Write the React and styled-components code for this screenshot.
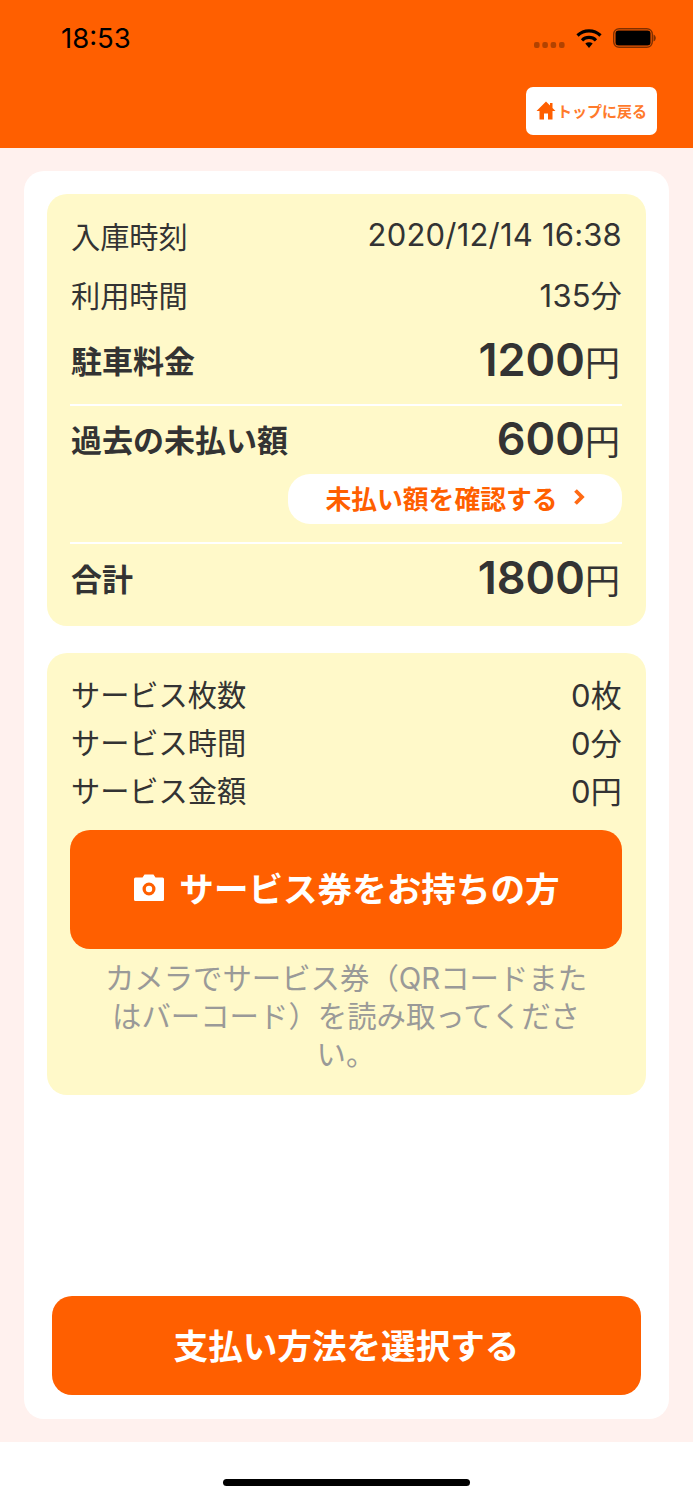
import React from "react";
import styled, { createGlobalStyle } from "styled-components";

const ORANGE = "#ff5f00";
const INK = "#333333";

const GlobalStyle = createGlobalStyle`
  html, body {
    margin: 0;
    padding: 0;
    background: #ffffff;
  }
  * {
    box-sizing: border-box;
  }
`;

const Root = styled.div`
  width: 693px;
  height: 1500px;
  display: flex;
  flex-direction: column;
  font-family: Inter, "Noto Sans CJK JP", sans-serif;
  color: ${INK};
`;

const Header = styled.header`
  height: 148px;
  background: ${ORANGE};
  padding: 0 36px 13px 61px;
  display: flex;
  flex-direction: column;
`;

const StatusBar = styled.div`
  height: 87px;
  padding-top: 21px;
  display: flex;
  justify-content: space-between;
  align-items: flex-start;
`;

const Clock = styled.span`
  font-family: Inter, "Liberation Sans", sans-serif;
  font-size: 27.500px;
  line-height: 34px;
  color: #000000;
`;

const StatusIcons = styled.div`
  display: flex;
  align-items: flex-start;
  gap: 11px;
  margin-right: 1px;
  margin-top: 7px;
`;

const TopLink = styled.div`
  align-self: flex-end;
  width: 131px;
  height: 48px;
  padding-bottom: 2px;
  background: #ffffff;
  border-radius: 7px;
  display: flex;
  align-items: center;
  justify-content: center;
  gap: 1px;
  color: #ff7a2b;
  font-size: 15px;
  font-weight: 700;
  white-space: nowrap;
`;

const Main = styled.main`
  height: 1294px;
  background: #fff1ee;
  padding: 23px 24px;
`;

const Sheet = styled.div`
  height: 1248px;
  background: #ffffff;
  border-radius: 20px;
  padding: 23px;
  display: flex;
  flex-direction: column;
`;

const Panel = styled.section`
  background: #fff9c9;
  border-radius: 20px;
  padding: ${(p) => p.$padding};
  margin-bottom: ${(p) => p.$gap || "0"};
  display: flex;
  flex-direction: column;
`;

const Row = styled.div`
  display: flex;
  justify-content: space-between;
  align-items: center;
  height: ${(p) => p.$height};
  margin-bottom: ${(p) => p.$after || "0"};
  padding: 0 1px 4px;
`;

const Label = styled.span`
  font-size: ${(p) => (p.$bold ? "31px" : "29.200px")};
  font-weight: ${(p) => (p.$bold ? 600 : 400)};
  white-space: nowrap;
`;

const Value = styled.span`
  font-size: 31px;
  letter-spacing: 0.200px;
  margin-right: -1px;
  white-space: nowrap;
`;

const Amount = styled.span`
  font-size: 45px;
  font-weight: 600;
  white-space: nowrap;
  display: flex;
  align-items: baseline;
  margin-right: 1px;
`;

const Yen = styled.span`
  font-size: 35px;
  font-weight: 400;
`;

const Divider = styled.hr`
  width: 100%;
  height: 2px;
  margin: ${(p) => p.$top || "0"} 0 0;
  border: 0;
  background: #ffffff;
`;

const CheckLink = styled.div`
  align-self: flex-end;
  width: 334px;
  height: 50px;
  padding-bottom: 4px;
  background: #ffffff;
  border-radius: 22px;
  display: flex;
  align-items: center;
  justify-content: center;
  gap: 15px;
  color: ${ORANGE};
  font-size: 25.800px;
  font-weight: 600;
`;

const ServiceButton = styled.button`
  width: 100%;
  height: 119px;
  margin-top: 15px;
  padding: 0 0 5px 2px;
  border: 0;
  border-radius: 20px;
  background: ${ORANGE};
  color: #ffffff;
  font-family: inherit;
  font-size: 34.600px;
  font-weight: 600;
  display: flex;
  align-items: center;
  justify-content: center;
  gap: 15px;
`;

const Note = styled.p`
  margin: 11px 31px 0;
  font-size: 29.400px;
  line-height: 38px;
  color: #9a9a98;
  text-align: center;
`;

const PayButton = styled.button`
  width: 589px;
  height: 99px;
  margin: auto 0 1px 5px;
  padding: 0 0 4px;
  border: 0;
  border-radius: 20px;
  background: ${ORANGE};
  color: #ffffff;
  font-family: inherit;
  font-size: 34.600px;
  font-weight: 600;
`;

const HomeBar = styled.div`
  flex: 1;
  display: flex;
  justify-content: center;
  padding-top: 37px;
  background: #ffffff;
  &::after {
    content: "";
    width: 247px;
    height: 7px;
    border-radius: 4px;
    background: #000000;
  }
`;

const SignalDots = styled.svg`
  margin-top: 14px;
`;

const Wifi = () => (
  <svg width="26" height="20" viewBox="0 0 26 20">
    <path d="M1.500 7.500a16.500 16.500 0 0 1 23 0" fill="none" stroke="#000" strokeWidth="3.200" />
    <path d="M6 12.300a10 10 0 0 1 14 0" fill="none" stroke="#000" strokeWidth="3.200" />
    <path d="M9.300 15.600a5.500 5.500 0 0 1 7.400 0L13 20z" fill="#000" />
  </svg>
);

const Signal = () => (
  <SignalDots width="31" height="6" viewBox="0 0 31 6">
    {[0, 8.300, 16.600, 25].map((x) => (
      <rect key={x} x={x} width="5.600" height="6" rx="2" fill="#000" opacity="0.3" />
    ))}
  </SignalDots>
);

const Battery = () => (
  <svg width="43" height="20" viewBox="0 0 43 20">
    <rect x="0.700" y="0.700" width="38.600" height="18.600" rx="5.500" fill="none" stroke="#000" strokeOpacity="0.5" strokeWidth="1.400" />
    <rect x="2.500" y="2.500" width="35" height="15" rx="3" fill="#000" />
    <path d="M40.500 6.500v7c1.400-.5 2.300-2 2.300-3.500s-.9-3-2.300-3.500z" fill="#000" opacity="0.5" />
  </svg>
);

const HomeIcon = () => (
  <svg width="20" height="19" viewBox="0 0 20 19">
    <path d="M10 0.500 0.500 10H3.500V18.500H8V12.500H12V18.500H16.500V10H19.500L16.500 7V2H14V4.500z" fill={ORANGE} />
  </svg>
);

const Chevron = () => (
  <svg width="12" height="18" viewBox="0 0 12 18">
    <path d="M2.500 2.500 9 9l-6.500 6.500" fill="none" stroke="#ff6a14" strokeWidth="3.800" />
  </svg>
);

const CameraIcon = () => (
  <svg width="30" height="27" viewBox="0 0 30 27">
    <path
      fillRule="evenodd"
      fill="#fff"
      d="M8.500 3.500 10.500 0.500H19.500L21.500 3.500H28.500A1.500 1.500 0 0 1 30 5V25.500A1.500 1.500 0 0 1 28.500 27H1.500A1.500 1.500 0 0 1 0 25.500V5A1.500 1.500 0 0 1 1.500 3.500zM15 8.500a6.500 6.500 0 1 0 0 13 6.500 6.500 0 0 0 0-13z"
    />
    <circle cx="15" cy="15" r="3.200" fill="#fff" />
  </svg>
);

const App = () => (
  <Root>
    <GlobalStyle />
    <Header>
      <StatusBar>
        <Clock>18:53</Clock>
        <StatusIcons>
          <Signal />
          <Wifi />
          <Battery />
        </StatusIcons>
      </StatusBar>
      <TopLink>
        <HomeIcon />
        トップに戻る
      </TopLink>
    </Header>
    <Main>
      <Sheet>
        <Panel $padding="13px 24px 11px 23px" $gap="27px">
          <Row $height="59px">
            <Label>入庫時刻</Label>
            <Value>2020/12/14 16:38</Value>
          </Row>
          <Row $height="59px">
            <Label>利用時間</Label>
            <Value>135分</Value>
          </Row>
          <Row $height="72px" $after="7px">
            <Label $bold>駐車料金</Label>
            <Amount>
              1200<Yen>円</Yen>
            </Amount>
          </Row>
          <Divider />
          <Row $height="68px">
            <Label $bold>過去の未払い額</Label>
            <Amount>
              600<Yen>円</Yen>
            </Amount>
          </Row>
          <CheckLink>
            未払い額を確認する
            <Chevron />
          </CheckLink>
          <Divider $top="18px" />
          <Row $height="71px">
            <Label $bold>合計</Label>
            <Amount>
              1800<Yen>円</Yen>
            </Amount>
          </Row>
        </Panel>
        <Panel $padding="18px 24px 21px 23px">
          <Row $height="48px">
            <Label>サービス枚数</Label>
            <Value>0枚</Value>
          </Row>
          <Row $height="48px">
            <Label>サービス時間</Label>
            <Value>0分</Value>
          </Row>
          <Row $height="48px">
            <Label>サービス金額</Label>
            <Value>0円</Value>
          </Row>
          <ServiceButton>
            <CameraIcon />
            サービス券をお持ちの方
          </ServiceButton>
          <Note>カメラでサービス券（QRコードまたはバーコード）を読み取ってください。</Note>
        </Panel>
        <PayButton>支払い方法を選択する</PayButton>
      </Sheet>
    </Main>
    <HomeBar />
  </Root>
);

export default App;
